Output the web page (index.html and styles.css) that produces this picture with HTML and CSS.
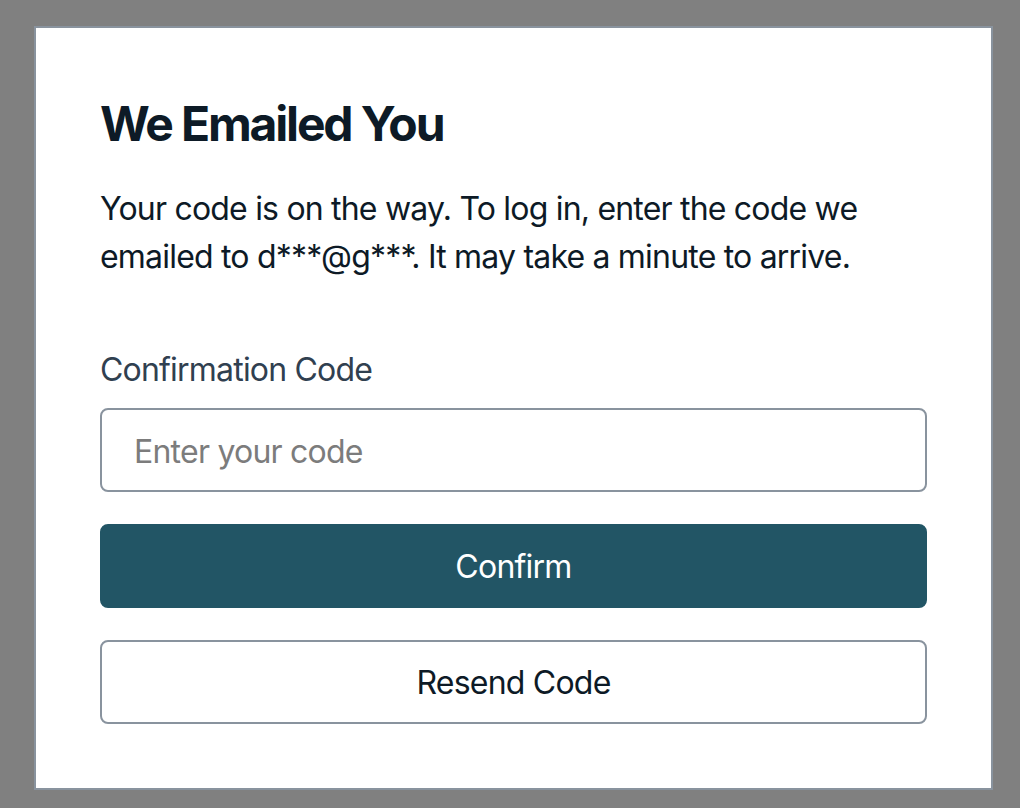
FILE: index.html
```html
<!DOCTYPE html>
<html lang="en">
<head>
<meta charset="utf-8">
<title>We Emailed You</title>
<link rel="stylesheet" href="styles.css">
</head>
<body>
<div class="card">
  <form class="form">
    <div class="header">
      <h3 class="heading">We Emailed You</h3>
      <p class="text">Your code is on the way. To log in, enter the code we emailed to d***@g***. It may take a minute to arrive.</p>
    </div>
    <div class="field">
      <label class="label" for="code">Confirmation Code</label>
      <input class="input" id="code" type="text" placeholder="Enter your code">
    </div>
    <div class="actions">
      <button type="button" class="btn btn-primary">Confirm</button>
      <button type="button" class="btn btn-secondary">Resend Code</button>
    </div>
  </form>
</div>
</body>
</html>
```
FILE: styles.css
```css
* { box-sizing: border-box; }
html, body { margin: 0; padding: 0; }
body {
  background: #808080;
  font-family: Inter, "Noto Sans", sans-serif;
  color: #0d1a26;
  padding: 26px 27px 19px 34px;
  letter-spacing: -0.05em;
}
.card {
  width: 959px;
  background: #ffffff;
  border: 2px solid #89939e;
}
.form {
  padding: 64px;
  display: flex;
  flex-direction: column;
  gap: 64px;
}
.header {
  display: flex;
  flex-direction: column;
  gap: 30px;
}
.heading {
  margin: 0;
  font-size: 48px;
  line-height: 60px;
  font-weight: 700;
  letter-spacing: -0.045em;
  color: #0d1a26;
  padding-top: 2px;
}
.text {
  margin: 0;
  font-size: 32px;
  line-height: 48px;
  color: #0d1a26;
  padding: 1px 0 1px;
}
.field {
  display: flex;
  flex-direction: column;
  gap: 14px;
}
.label {
  font-size: 32px;
  line-height: 48px;
  color: #304050;
}
.input {
  width: 100%;
  height: 84px;
  font-family: inherit;
  font-size: 32px;
  line-height: 48px;
  letter-spacing: -0.024em;
  padding: 17px 32px 15px;
  border: 2px solid #89939e;
  border-radius: 8px;
  color: #0d1a26;
  background: #fff;
  outline: none;
}
.input::placeholder { color: #7c7c7c; }
.actions {
  display: flex;
  flex-direction: column;
  gap: 32px;
  margin-top: -32px;
}
.btn {
  width: 100%;
  height: 84px;
  font-family: inherit;
  font-size: 32px;
  line-height: 48px;
  letter-spacing: -0.024em;
  font-weight: 400;
  border-radius: 8px;
  cursor: pointer;
  padding: 2px 0 0;
}
.btn-primary {
  background: #225565;
  color: #ffffff;
  border: 2px solid #225565;
}
.btn-secondary {
  background: #ffffff;
  color: #0d1a26;
  border: 2px solid #89939e;
}
```
